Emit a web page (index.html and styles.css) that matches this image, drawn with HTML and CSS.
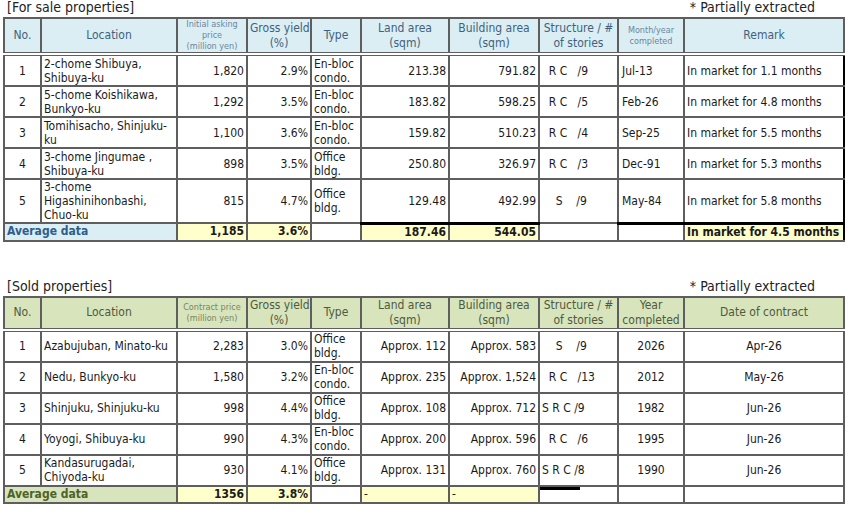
FILE: index.html
```html
<!DOCTYPE html>
<html lang="en">
<head>
<meta charset="utf-8">
<title>Properties</title>
<link rel="stylesheet" href="styles.css">
</head>
<body>
<section class="block sale">
  <div class="caption"><span class="title">[For sale properties]</span><span class="note">* Partially extracted</span></div>
  <table class="grid">
    <colgroup>
      <col class="c-no"><col class="c-loc"><col class="c-price"><col class="c-yield"><col class="c-type"><col class="c-land"><col class="c-bldg"><col class="c-str"><col class="c-year"><col class="c-last">
    </colgroup>
    <thead>
      <tr>
        <th>No.</th>
        <th>Location</th>
        <th class="tiny">Initial asking<br>price<br>(million yen)</th>
        <th>Gross yield<br>(%)</th>
        <th>Type</th>
        <th>Land area<br>(sqm)</th>
        <th>Building area<br>(sqm)</th>
        <th>Structure / #<br>of stories</th>
        <th class="tiny">Month/year<br>completed</th>
        <th>Remark</th>
      </tr>
    </thead>
    <tbody>
      <tr>
        <td class="ctr">1</td><td>2-chome Shibuya,<br>Shibuya-ku</td><td class="num">1,820</td><td class="num">2.9%</td><td>En-bloc<br>condo.</td><td class="num">213.38</td><td class="num">791.82</td><td class="str">  R C   /9</td><td class="date">Jul-13</td><td class="rmk">In market for 1.1 months</td>
      </tr>
      <tr>
        <td class="ctr">2</td><td>5-chome Koishikawa,<br>Bunkyo-ku</td><td class="num">1,292</td><td class="num">3.5%</td><td>En-bloc<br>condo.</td><td class="num">183.82</td><td class="num">598.25</td><td class="str">  R C   /5</td><td class="date">Feb-26</td><td class="rmk">In market for 4.8 months</td>
      </tr>
      <tr>
        <td class="ctr">3</td><td>Tomihisacho, Shinjuku-<br>ku</td><td class="num">1,100</td><td class="num">3.6%</td><td>En-bloc<br>condo.</td><td class="num">159.82</td><td class="num">510.23</td><td class="str">  R C   /4</td><td class="date">Sep-25</td><td class="rmk">In market for 5.5 months</td>
      </tr>
      <tr>
        <td class="ctr">4</td><td>3-chome  Jingumae ,<br>Shibuya-ku</td><td class="num">898</td><td class="num">3.5%</td><td>Office<br>bldg.</td><td class="num">250.80</td><td class="num">326.97</td><td class="str">  R C   /3</td><td class="date">Dec-91</td><td class="rmk">In market for 5.3 months</td>
      </tr>
      <tr class="tall">
        <td class="ctr">5</td><td>3-chome<br>Higashinihonbashi,<br>Chuo-ku</td><td class="num">815</td><td class="num">4.7%</td><td>Office<br>bldg.</td><td class="num">129.48</td><td class="num">492.99</td><td class="str">    S    /9</td><td class="date">May-84</td><td class="rmk">In market for 5.8 months</td>
      </tr>
    </tbody>
    <tfoot>
      <tr>
        <td class="avg-label" colspan="2">Average data</td><td class="num hl">1,185</td><td class="num hl">3.6%</td><td></td><td class="num hl top-black">187.46</td><td class="num hl top-black">544.05</td><td></td><td class="top-black"></td><td class="hl top-black">In market for 4.5 months</td>
      </tr>
    </tfoot>
  </table>
</section>

<section class="block sold">
  <div class="caption"><span class="title">[Sold properties]</span><span class="note">* Partially extracted</span></div>
  <table class="grid">
    <colgroup>
      <col class="c-no"><col class="c-loc"><col class="c-price"><col class="c-yield"><col class="c-type"><col class="c-land"><col class="c-bldg"><col class="c-str"><col class="c-year"><col class="c-last">
    </colgroup>
    <thead>
      <tr>
        <th>No.</th>
        <th>Location</th>
        <th class="tiny">Contract price<br>(million yen)</th>
        <th>Gross yield<br>(%)</th>
        <th>Type</th>
        <th>Land area<br>(sqm)</th>
        <th>Building area<br>(sqm)</th>
        <th>Structure / #<br>of stories</th>
        <th>Year<br>completed</th>
        <th>Date of contract</th>
      </tr>
    </thead>
    <tbody>
      <tr>
        <td class="ctr">1</td><td>Azabujuban, Minato-ku</td><td class="num">2,283</td><td class="num">3.0%</td><td>Office<br>bldg.</td><td class="num">Approx. 112</td><td class="num">Approx. 583</td><td class="str">    S    /9</td><td class="ctr">2026</td><td class="ctr">Apr-26</td>
      </tr>
      <tr>
        <td class="ctr">2</td><td>Nedu, Bunkyo-ku</td><td class="num">1,580</td><td class="num">3.2%</td><td>En-bloc<br>condo.</td><td class="num">Approx. 235</td><td class="num">Approx. 1,524</td><td class="str">  R C   /13</td><td class="ctr">2012</td><td class="ctr">May-26</td>
      </tr>
      <tr>
        <td class="ctr">3</td><td>Shinjuku, Shinjuku-ku</td><td class="num">998</td><td class="num">4.4%</td><td>Office<br>bldg.</td><td class="num">Approx. 108</td><td class="num">Approx. 712</td><td class="str">S R C /9</td><td class="ctr">1982</td><td class="ctr">Jun-26</td>
      </tr>
      <tr>
        <td class="ctr">4</td><td>Yoyogi, Shibuya-ku</td><td class="num">990</td><td class="num">4.3%</td><td>En-bloc<br>condo.</td><td class="num">Approx. 200</td><td class="num">Approx. 596</td><td class="str">  R C   /6</td><td class="ctr">1995</td><td class="ctr">Jun-26</td>
      </tr>
      <tr>
        <td class="ctr">5</td><td>Kandasurugadai,<br>Chiyoda-ku</td><td class="num">930</td><td class="num">4.1%</td><td>Office<br>bldg.</td><td class="num">Approx. 131</td><td class="num">Approx. 760</td><td class="str">S R C /8</td><td class="ctr">1990</td><td class="ctr">Jun-26</td>
      </tr>
    </tbody>
    <tfoot>
      <tr>
        <td class="avg-label" colspan="2">Average data</td><td class="num hl">1356</td><td class="num hl">3.8%</td><td></td><td class="hl dash">-</td><td class="hl dash">-</td><td class="mark"></td><td></td><td></td>
      </tr>
    </tfoot>
  </table>
</section>
</body>
</html>
```

FILE: styles.css
```css
html, body {
  margin: 0;
  padding: 0;
  background: #ffffff;
}

body {
  font-family: "DejaVu Sans Condensed", "DejaVu Sans", sans-serif;
  font-stretch: condensed;
  font-size: 12px;
  color: #1a1a1a;
  padding: 0 3px;
  width: 843px;
}

.block + .block {
  margin-top: 37px;
}

.caption {
  display: flex;
  justify-content: space-between;
  align-items: flex-start;
  height: 17px;
  font-size: 14px;
  line-height: 15px;
  color: #222;
  padding: 0 31px 0 4px;
}

.grid {
  border-collapse: collapse;
  table-layout: fixed;
  width: 840px;
}

.c-no { width: 37px; }
.c-loc { width: 136px; }
.c-price { width: 70px; }
.c-yield { width: 64px; }
.c-type { width: 50px; }
.c-land { width: 88px; }
.c-bldg { width: 90px; }
.c-str { width: 79px; }
.c-year { width: 66px; }
.c-last { width: 160px; }

.grid th,
.grid td {
  border: 2px solid #5e5e5e;
  padding: 0 2px;
  line-height: 14px;
  overflow: hidden;
  white-space: nowrap;
}

.grid th {
  font-weight: normal;
  text-align: center;
  vertical-align: middle;
  height: 33px;
  line-height: 15px;
  border-bottom: 4px double #5e5e5e;
}

.sold .grid th {
  height: 29px;
}

.sale th {
  background: #daeef3;
  color: #42617f;
}

.sold th {
  background: #d7e4bc;
  color: #4f5a3c;
}

.grid th.tiny {
  font-size: 9px;
  line-height: 11px;
  color: #6b87a2;
}

.sold .grid th.tiny {
  color: #7a8467;
}

.grid tbody td {
  height: 29px;
  vertical-align: middle;
}

.grid tbody tr.tall td {
  height: 41px;
}

.ctr { text-align: center; }
.num { text-align: right; }
.grid td.date { padding-left: 3px; }
.grid td.rmk { padding-left: 2px; }
.grid td.str { white-space: pre; }

.grid tfoot td {
  height: 15px;
  line-height: 15px;
  font-weight: bold;
  padding-top: 0;
  padding-bottom: 0;
}

.hl { background: #ffffcc; }

.sale .avg-label {
  background: #daeef3;
  color: #2f5d8c;
}

.sold .avg-label {
  background: #d7e4bc;
  color: #4f6228;
}

.grid td.dash { font-weight: normal; }

.sale .top-black {
  border-top: 3px solid #000;
}

.sale tbody td:last-child,
.sale tfoot td:last-child {
  border-right-color: #000;
}

.sold td.mark {
  background: linear-gradient(#000, #000) no-repeat 0 0 / 40px 3px;
}
```
